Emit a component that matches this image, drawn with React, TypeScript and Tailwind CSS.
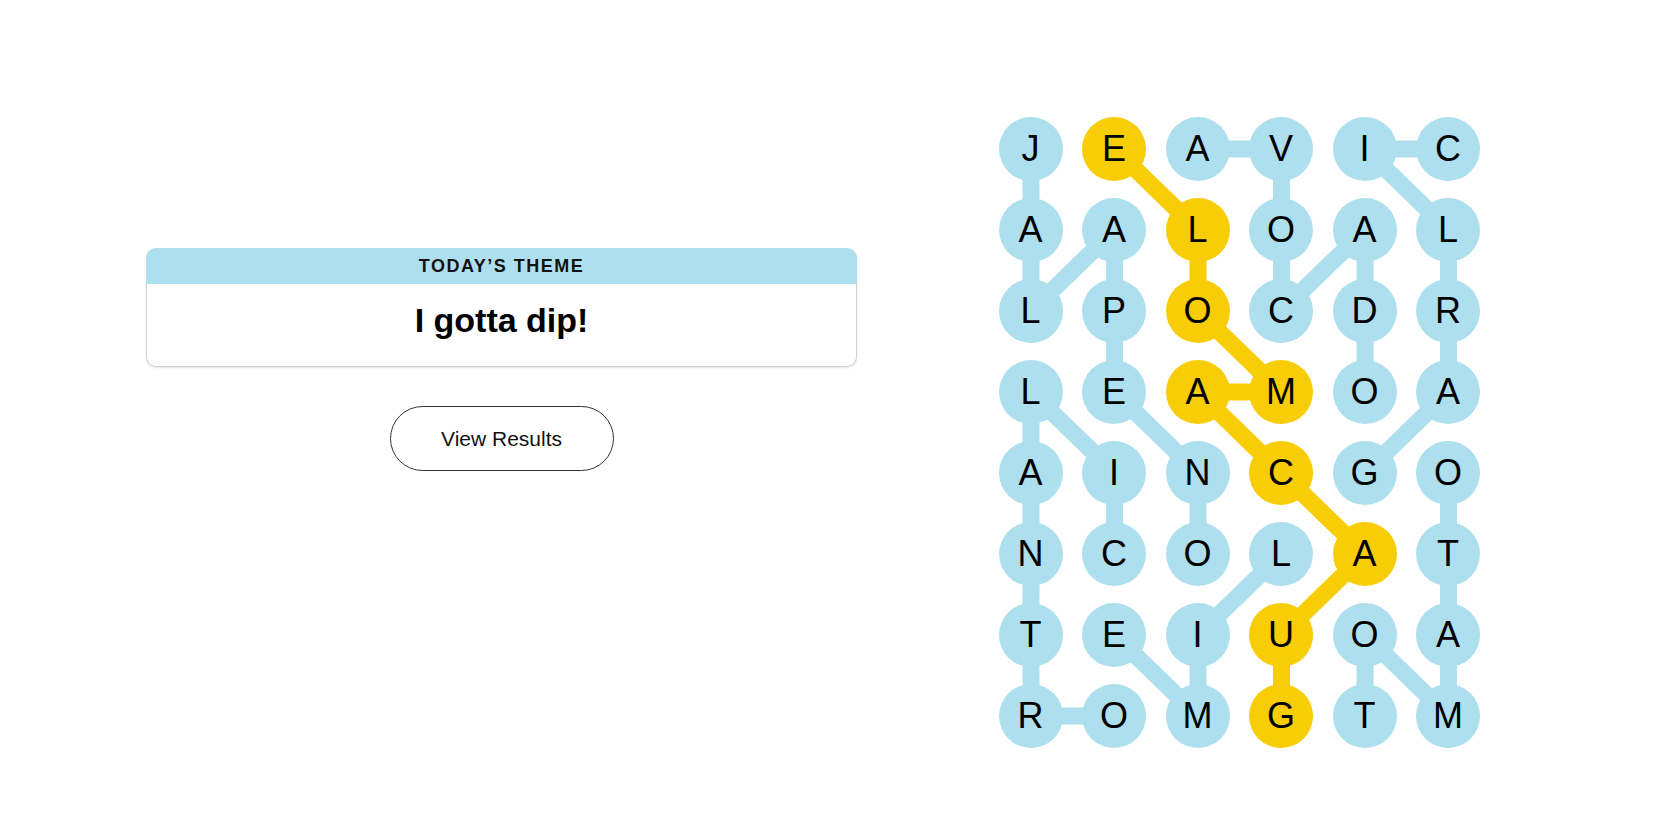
import React from 'react'

const rows = ['JEAVIC', 'AALOAL', 'LPOCDR', 'LEAMOA', 'AINCGO', 'NCOLAT', 'TEIUOA', 'ROMGTM']

type Cell = [number, number]

// words found, as chains of [row, col]
const themeWords: Cell[][] = [
  [[0, 0], [1, 0], [2, 0], [1, 1], [2, 1], [3, 1], [4, 2], [5, 2]],
  [[0, 2], [0, 3], [1, 3], [2, 3], [1, 4], [2, 4], [3, 4]],
  [[4, 4], [3, 5], [2, 5], [1, 5], [0, 4], [0, 5]],
  [[5, 1], [4, 1], [3, 0], [4, 0], [5, 0], [6, 0], [7, 0], [7, 1]],
  [[7, 4], [6, 4], [7, 5], [6, 5], [5, 5], [4, 5]],
  [[5, 3], [6, 2], [7, 2], [6, 1]],
]

const spangram: Cell[] = [[7, 3], [6, 3], [5, 4], [4, 3], [3, 2], [3, 3], [2, 2], [1, 2], [0, 1]]

const BLUE = '#aedfee'
const YELLOW = '#f8cd05'

const cx = (c: number) => 32 + c * 83.5
const cy = (r: number) => 32 + r * 81

function Chain({ cells, color }: { cells: Cell[]; color: string }) {
  const points = cells.map(([r, c]) => `${cx(c)},${cy(r)}`).join(' ')
  return <polyline points={points} fill="none" stroke={color} strokeWidth={17} strokeLinejoin="round" />
}

function Board() {
  const isSpan = (r: number, c: number) => spangram.some(([a, b]) => a === r && b === c)

  return (
    <div className="relative">
      <svg className="absolute inset-0" width="481.5" height="631" viewBox="0 0 481.5 631">
        {themeWords.map((w, i) => (
          <Chain key={i} cells={w} color={BLUE} />
        ))}
        <Chain cells={spangram} color={YELLOW} />
      </svg>
      <div className="relative grid grid-cols-[repeat(6,64px)] gap-x-[19.5px] gap-y-[17px]">
        {rows.map((row, r) =>
          row.split('').map((letter, c) => (
            <div
              key={`${r}-${c}`}
              className={`flex h-16 w-16 items-center justify-center rounded-full text-[36px] leading-none text-black ${
                isSpan(r, c) ? 'bg-[#f8cd05]' : 'bg-[#aedfee]'
              }`}
            >
              {letter}
            </div>
          )),
        )}
      </div>
    </div>
  )
}

export default function App() {
  return (
    <div className="flex h-[840px] w-full bg-white font-['Liberation_Sans',Arial,sans-serif]">
      <div className="ml-[146px] mt-[248px] flex w-[711px] flex-col items-center">
        <div className="w-full shadow-[0_1px_2px_rgba(0,0,0,0.1)] rounded-[10px]">
          <div className="flex h-[36px] items-center justify-center rounded-t-[10px] bg-[#aedfee]">
            <span className="text-[18px] font-bold tracking-[1.5px] text-[#121212]">TODAY’S THEME</span>
          </div>
          <div className="flex h-[83px] items-center justify-center rounded-b-[10px] border border-t-0 border-[#d0d0d0] pb-[10px]">
            <span className="text-[34px] font-bold text-black">I gotta dip!</span>
          </div>
        </div>
        <button className="mt-[39px] h-[65px] w-[224px] rounded-full border border-[#333] bg-white text-[21px] text-[#121212]">
          View Results
        </button>
      </div>
      <div className="ml-[141.5px] mt-[117px]">
        <Board />
      </div>
    </div>
  )
}
